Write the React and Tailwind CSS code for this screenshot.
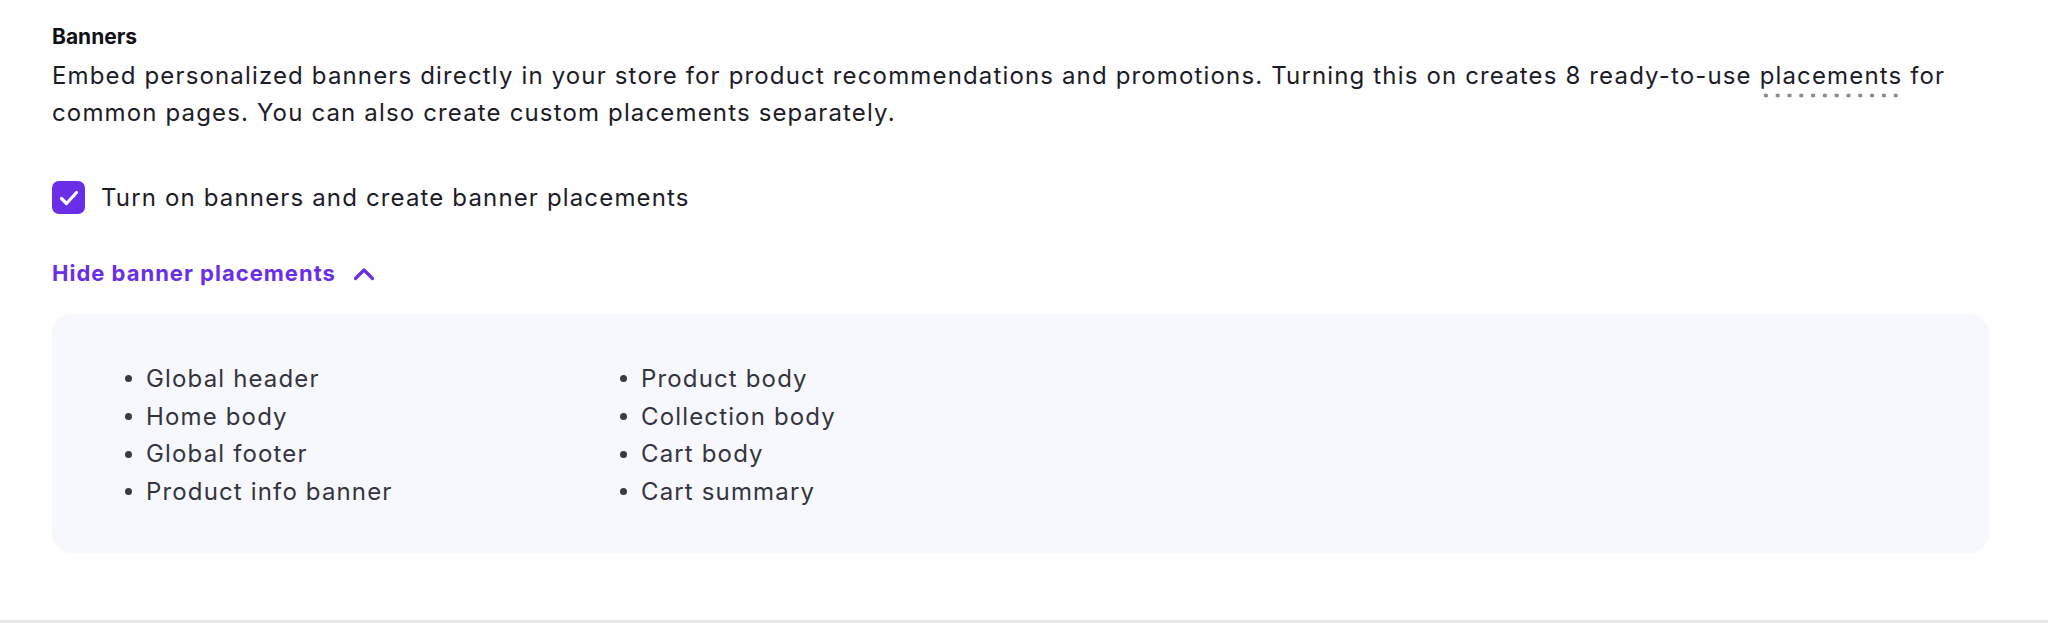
import React, { useState } from 'react';

const PLACEMENTS_LEFT = ['Global header', 'Home body', 'Global footer', 'Product info banner'];
const PLACEMENTS_RIGHT = ['Product body', 'Collection body', 'Cart body', 'Cart summary'];

const CheckIcon = () => (
  <svg width="20" height="16" viewBox="0 0 20 16" fill="none">
    <path d="M2.5 8.5l5 5L17.5 2.5" stroke="white" strokeWidth="3.2" strokeLinecap="round" strokeLinejoin="round" />
  </svg>
);

const ChevronUp = () => (
  <svg width="22" height="14" viewBox="0 0 22 14" fill="none">
    <path d="M2.5 11.5L11 3l8.5 8.5" stroke="#6a2ee8" strokeWidth="3.2" strokeLinecap="round" strokeLinejoin="round" />
  </svg>
);

const PlacementList = ({ items }) => (
  <ul className="flex flex-col">
    {items.map((item) => (
      <li key={item} className="flex items-center h-[37.7px]">
        <span className="w-[7px] h-[7px] rounded-full bg-[#3a3a44] mr-[14px]" />
        <span>{item}</span>
      </li>
    ))}
  </ul>
);

const App = () => {
  // Checkbox and toggle state
  const [enabled, setEnabled] = useState(true);
  const [showPlacements, setShowPlacements] = useState(true);

  return (
    <div
      className="h-[623px] bg-white border-b-[3px] border-[#e8e8e8] px-[52px] pt-[18px] text-[#1c1c28]"
      style={{ fontFamily: 'Inter, "Noto Sans", sans-serif' }}
    >
      <div className="w-[1937px]">
        <h2 className="text-[21px] leading-[37px] font-bold text-[#111118]">Banners</h2>
        <p className="text-[24px] tracking-[1.15px] leading-[37px] mt-[2px]">
          Embed personalized banners directly in your store for product recommendations and promotions. Turning this on creates 8 ready-to-use{' '}
          <span className="bg-[radial-gradient(circle,#8c8c96_1.8px,transparent_2.2px)] bg-[length:11.8px_5px] bg-repeat-x bg-[position:0_100%] pb-[8px]">
            placements
          </span>{' '}
          for
          <br />
          common pages. You can also create custom placements separately.
        </p>

        <label className="flex items-center mt-[48px] cursor-pointer select-none">
          <button
            type="button"
            onClick={() => setEnabled(!enabled)}
            className={`w-[33px] h-[33px] rounded-[7px] flex items-center justify-center ${enabled ? 'bg-[#6a2ee8]' : 'bg-white border-2 border-gray-400'}`}
          >
            {enabled && <CheckIcon />}
          </button>
          <span className="text-[24px] tracking-[1.15px] leading-[37px] ml-[16px]">Turn on banners and create banner placements</span>
        </label>

        <button
          type="button"
          onClick={() => setShowPlacements(!showPlacements)}
          className="flex items-center mt-[39px] text-[22px] tracking-[1px] leading-[37px] font-bold text-[#6a2ee8]"
        >
          Hide banner placements
          <span className="ml-[17px]">
            <ChevronUp />
          </span>
        </button>

        {showPlacements && (
          <div className="mt-[22px] h-[239px] rounded-[20px] bg-[#f7f8fd] pt-[46px] pl-[73px] flex text-[24px] tracking-[1.15px] text-[#34343e]">
            <div className="w-[495px]">
              <PlacementList items={PLACEMENTS_LEFT} />
            </div>
            <PlacementList items={PLACEMENTS_RIGHT} />
          </div>
        )}
      </div>
    </div>
  );
};

export default App;
